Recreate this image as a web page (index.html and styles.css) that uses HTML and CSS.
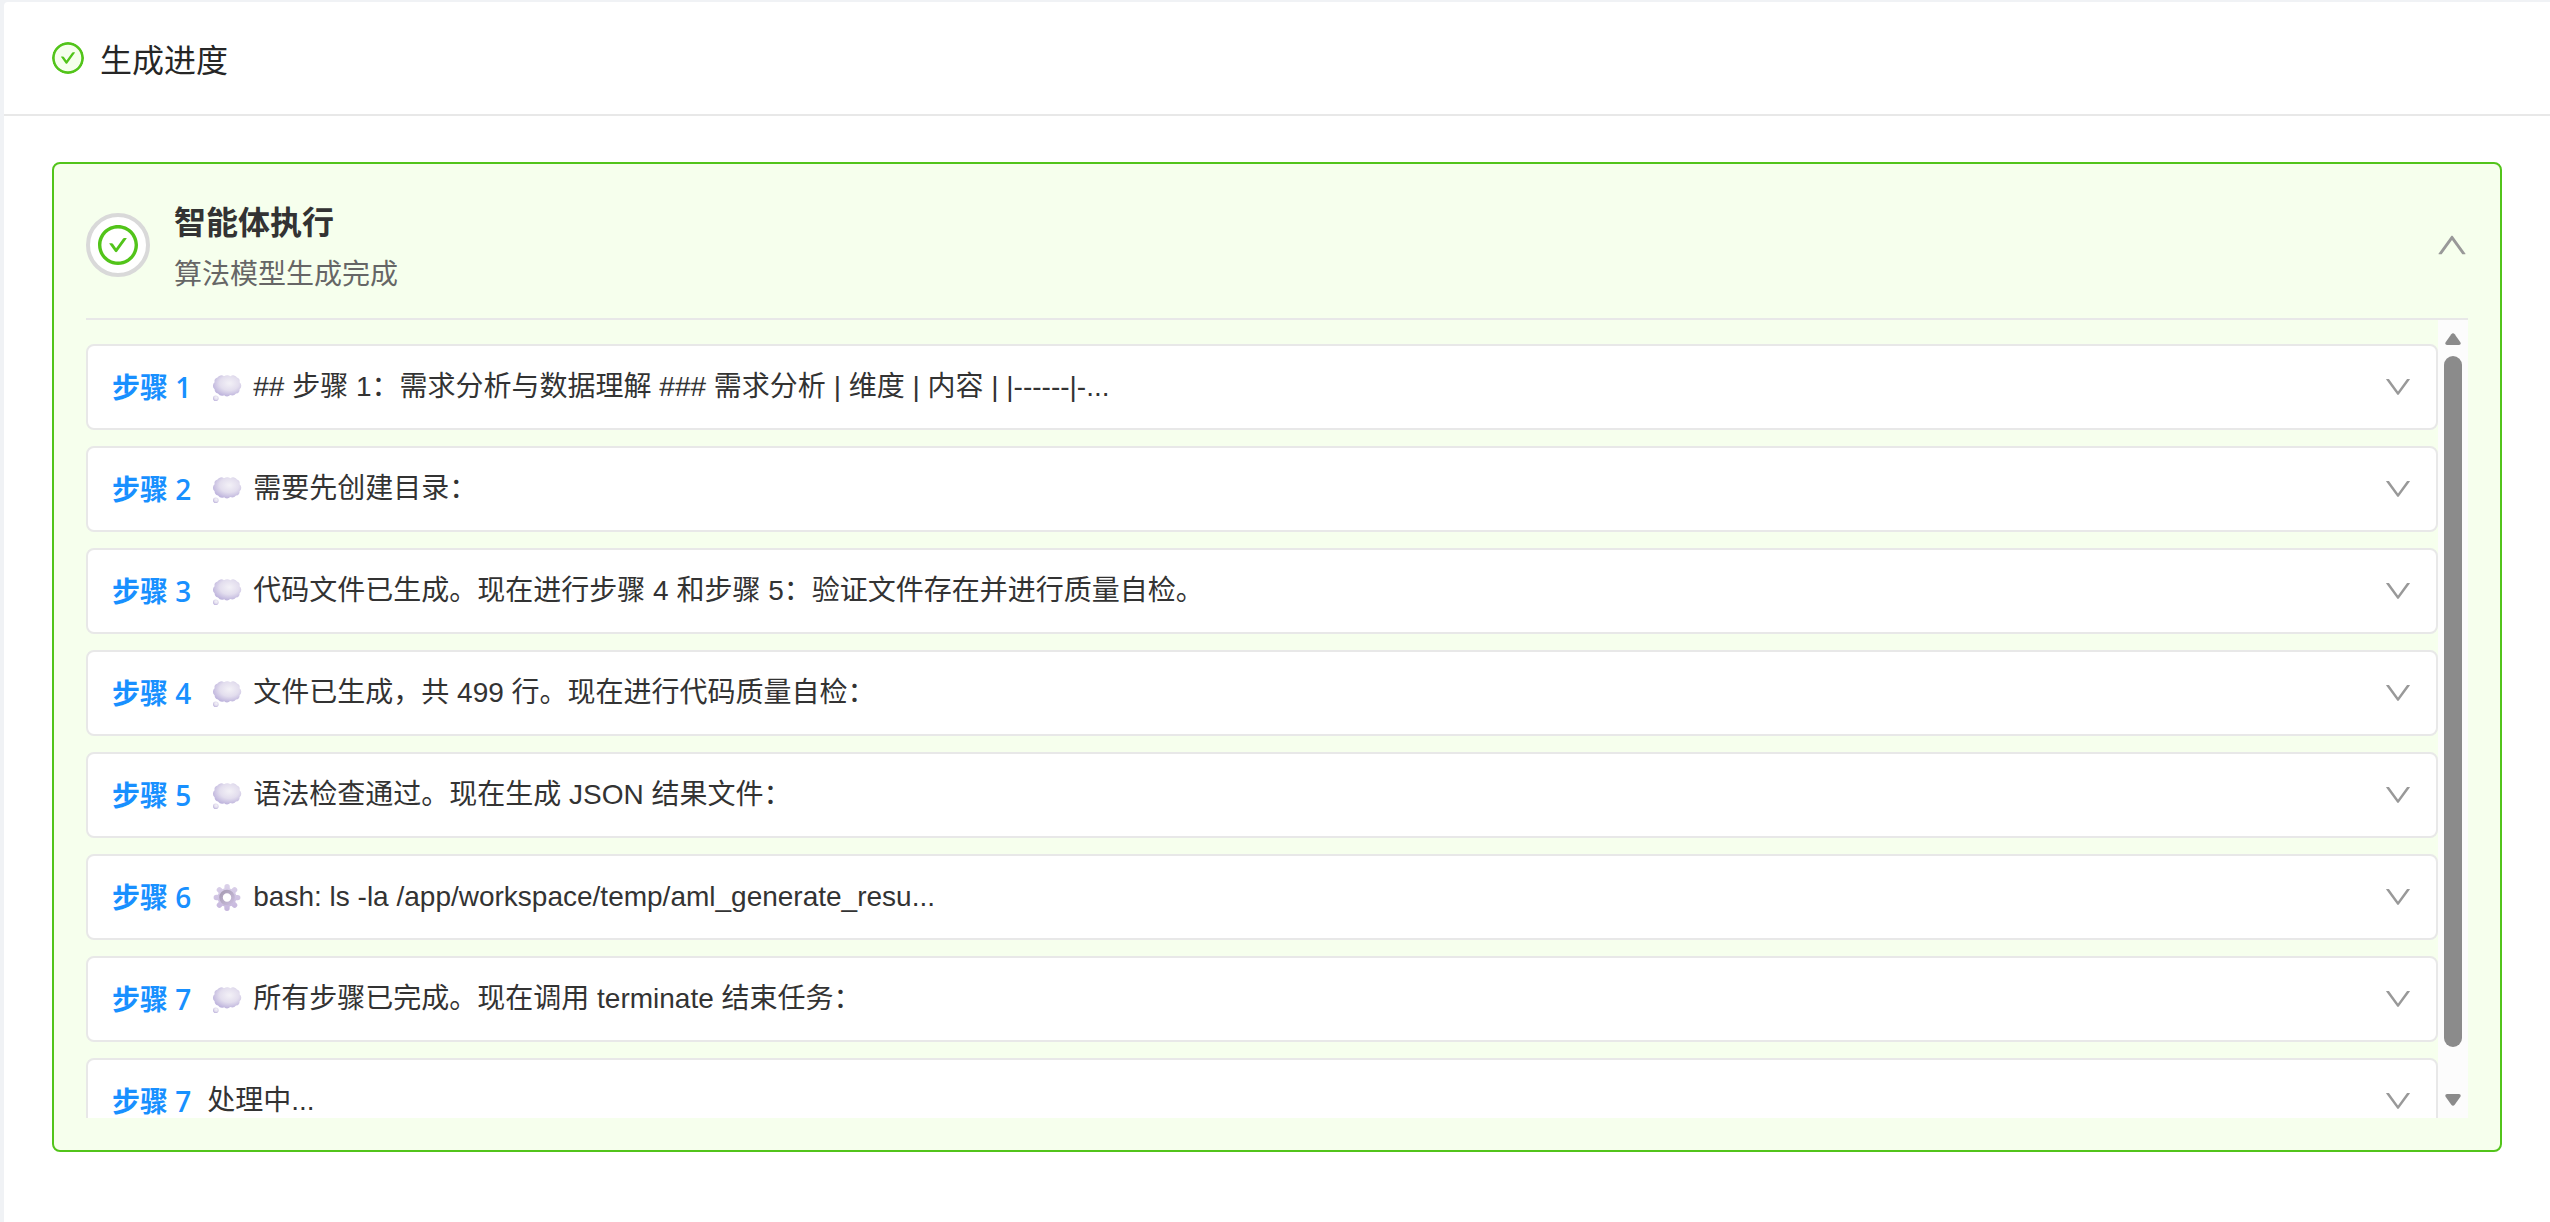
FILE: index.html
```
<!DOCTYPE html>
<html lang="zh-CN">
<head>
    <meta charset="UTF-8">
    <meta name="viewport" content="width=device-width, initial-scale=1.0">
    <title>生成进度</title>
    <link rel="stylesheet" href="styles.css">
</head>
<body>
    <!-- 图标定义 -->
    <svg class="icon-defs" aria-hidden="true">
        <defs>
            <radialGradient id="cloud-fill" cx="58%" cy="38%" r="62%">
                <stop offset="0" stop-color="#f3f1f7"/>
                <stop offset="0.55" stop-color="#e3deee"/>
                <stop offset="1" stop-color="#bfb5dd"/>
            </radialGradient>
            <linearGradient id="gear-fill" gradientUnits="userSpaceOnUse" x1="0" y1="1" x2="0" y2="29">
                <stop offset="0" stop-color="#dcd3ea"/>
                <stop offset="1" stop-color="#c5b5dc"/>
            </linearGradient>
            <linearGradient id="gear-ring" x1="0" y1="0" x2="1" y2="1">
                <stop offset="0" stop-color="#a79cb3"/>
                <stop offset="1" stop-color="#c9bcdc"/>
            </linearGradient>
        </defs>
        <symbol id="icon-check" viewBox="64 64 896 896">
            <path d="M699 353h-46.9c-10.2 0-19.9 4.9-25.9 13.3L469 584.3l-71.2-98.8c-6-8.3-15.6-13.3-25.9-13.3H325c-6.5 0-10.3 7.4-6.5 12.7l124.6 172.8a31.8 31.8 0 0051.7 0l210.6-292c3.9-5.3.1-12.7-6.4-12.7z"/>
            <path d="M512 64C264.6 64 64 264.6 64 512s200.6 448 448 448 448-200.6 448-448S759.4 64 512 64zm0 820c-205.4 0-372-166.6-372-372s166.6-372 372-372 372 166.6 372 372-166.6 372-372 372z"/>
        </symbol>
        <symbol id="icon-down" viewBox="64 64 896 896">
            <path d="M884 256h-75c-5.1 0-9.9 2.5-12.9 6.6L512 654.2 227.9 262.6c-3-4.1-7.8-6.6-12.9-6.6h-75c-6.5 0-10.3 7.4-6.5 12.7l352.6 486.1c12.8 17.6 39 17.6 51.7 0l352.6-486.1c3.9-5.3.1-12.7-6.4-12.7z"/>
        </symbol>
        <symbol id="icon-up" viewBox="64 64 896 896">
            <path d="M890.5 755.3L537.9 269.2c-12.8-17.6-39-17.6-51.7 0L133.5 755.3A8 8 0 00140 768h75c5.1 0 9.9-2.5 12.9-6.6L512 369.8l284.1 391.6c3 4.1 7.8 6.6 12.9 6.6h75c6.5 0 10.3-7.4 6.5-12.7z"/>
        </symbol>
        <symbol id="icon-thought" viewBox="0 0 38 30">
            <path fill="url(#cloud-fill)" d="M10.500 5.500A4.500 4.500 0 0 1 17 4.200A6 6 0 0 1 23.500 4.200A4.500 4.500 0 0 1 30 5.600A4 4 0 0 1 32.600 10.200A4.500 4.500 0 0 1 32.600 17.200A4.200 4.200 0 0 1 29 21.600A5 5 0 0 1 23.200 23A4.500 4.500 0 0 1 17.200 23.200A5 5 0 0 1 11 21.400A4.200 4.200 0 0 1 7.600 17.200A4.500 4.500 0 0 1 7.600 10.200A4 4 0 0 1 10.500 5.500Z"/>
            <circle cx="8.800" cy="26.200" r="2.800" fill="url(#cloud-fill)"/>
        </symbol>
        <symbol id="icon-gear" viewBox="0 0 38 30">
            <g stroke="url(#gear-fill)" stroke-width="5.400" stroke-linecap="round">
                <path d="M20.100 4.800L20 26.200"/>
                <path d="M9.300 15.500L30.700 15.600"/>
                <path d="M12.400 7.900L27.600 23.100"/>
                <path d="M27.600 7.900L12.400 23.100"/>
            </g>
            <circle cx="20" cy="15.500" r="9.400" fill="url(#gear-fill)"/>
            <circle cx="20" cy="15.500" r="6" fill="#fff" stroke="url(#gear-ring)" stroke-width="3.600"/>
        </symbol>
        <symbol id="icon-arrow" viewBox="0 0 16 12">
            <path d="M6.300 1.200Q8 -.8 9.700 1.200L15.400 9.200Q16.400 11.600 14 12H2Q-.4 11.600 .6 9.200Z"/>
        </symbol>
    </svg>

    <main class="panel">
        <header class="panel-header">
            <svg class="panel-icon"><use href="#icon-check"/></svg>
            <h1 class="panel-title">生成进度</h1>
        </header>

        <div class="panel-body">
            <section class="card">
                <button class="card-header" type="button" aria-expanded="true">
                    <span class="status"><svg class="status-icon"><use href="#icon-check"/></svg></span>
                    <span class="card-info">
                        <span class="card-title">智能体执行</span>
                        <span class="card-desc">算法模型生成完成</span>
                    </span>
                    <svg class="card-arrow"><use href="#icon-up"/></svg>
                </button>

                <div class="card-content">
                    <div class="steps">
                        <button class="step" type="button">
                            <span class="step-label">步骤 1</span>
                            <svg class="step-emoji"><use href="#icon-thought"/></svg>
                            <span class="step-text">## 步骤 1：需求分析与数据理解 ### 需求分析 | 维度 | 内容 | |------|-...</span>
                            <svg class="step-arrow"><use href="#icon-down"/></svg>
                        </button>
                        <button class="step" type="button">
                            <span class="step-label">步骤 2</span>
                            <svg class="step-emoji"><use href="#icon-thought"/></svg>
                            <span class="step-text">需要先创建目录：</span>
                            <svg class="step-arrow"><use href="#icon-down"/></svg>
                        </button>
                        <button class="step" type="button">
                            <span class="step-label">步骤 3</span>
                            <svg class="step-emoji"><use href="#icon-thought"/></svg>
                            <span class="step-text">代码文件已生成。现在进行步骤 4 和步骤 5：验证文件存在并进行质量自检。</span>
                            <svg class="step-arrow"><use href="#icon-down"/></svg>
                        </button>
                        <button class="step" type="button">
                            <span class="step-label">步骤 4</span>
                            <svg class="step-emoji"><use href="#icon-thought"/></svg>
                            <span class="step-text">文件已生成，共 499 行。现在进行代码质量自检：</span>
                            <svg class="step-arrow"><use href="#icon-down"/></svg>
                        </button>
                        <button class="step" type="button">
                            <span class="step-label">步骤 5</span>
                            <svg class="step-emoji"><use href="#icon-thought"/></svg>
                            <span class="step-text">语法检查通过。现在生成 JSON 结果文件：</span>
                            <svg class="step-arrow"><use href="#icon-down"/></svg>
                        </button>
                        <button class="step" type="button">
                            <span class="step-label">步骤 6</span>
                            <svg class="step-emoji"><use href="#icon-gear"/></svg>
                            <span class="step-text">bash: ls -la /app/workspace/temp/aml_generate_resu...</span>
                            <svg class="step-arrow"><use href="#icon-down"/></svg>
                        </button>
                        <button class="step" type="button">
                            <span class="step-label">步骤 7</span>
                            <svg class="step-emoji"><use href="#icon-thought"/></svg>
                            <span class="step-text">所有步骤已完成。现在调用 terminate 结束任务：</span>
                            <svg class="step-arrow"><use href="#icon-down"/></svg>
                        </button>
                        <button class="step" type="button">
                            <span class="step-label">步骤 7</span>
                            <span class="step-text">处理中...</span>
                            <svg class="step-arrow"><use href="#icon-down"/></svg>
                        </button>
                    </div>
                    <div class="scrollbar" aria-hidden="true">
                        <svg class="scroll-arrow"><use href="#icon-arrow"/></svg>
                        <div class="scroll-track"><div class="scroll-thumb"></div></div>
                        <svg class="scroll-arrow down"><use href="#icon-arrow"/></svg>
                    </div>
                </div>
            </section>
        </div>
    </main>
</body>
</html>
```
FILE: styles.css
```
* {
    margin: 0;
    padding: 0;
    box-sizing: border-box;
}

body {
    min-height: 100vh;
    padding: 2px 0 0 4px;
    display: flex;
    background-color: #f0f2f5;
    color: #333;
    font-family: 'Noto Sans CJK SC', sans-serif;
    font-size: 28px;
    line-height: 44px;
}

button {
    background: none;
    border: none;
    color: inherit;
    font: inherit;
    text-align: left;
    cursor: pointer;
}

svg {
    display: block;
    flex-shrink: 0;
    fill: currentColor;
}

.icon-defs {
    position: absolute;
    width: 0;
    height: 0;
}

.panel {
    flex: 1;
    min-width: 0;
    background-color: #fff;
    border-top-left-radius: 4px;
}

.panel-header {
    display: flex;
    align-items: center;
    gap: 16px;
    padding: 32px 48px;
    border-bottom: 2px solid #e8e8e8;
}

.panel-icon {
    width: 32px;
    height: 32px;
    color: #52c41a;
    background-color: #f6ffed;
    border-radius: 50%;
}

.panel-title {
    color: #262626;
    font-size: 32px;
    font-weight: 400;
    line-height: 48px;
}

.panel-body {
    padding: 46px 48px;
}

.card {
    padding: 32px;
    background-color: #f6ffed;
    border: 2px solid #52c41a;
    border-radius: 8px;
}

.card-header {
    display: flex;
    align-items: center;
    gap: 24px;
    width: 100%;
    padding-bottom: 24px;
    border-bottom: 2px solid #e8e8e8;
}

.status {
    display: flex;
    align-items: center;
    justify-content: center;
    width: 64px;
    height: 64px;
    background-color: #fff;
    border: 4px solid #d9d9d9;
    border-radius: 50%;
}

.status-icon {
    width: 40px;
    height: 40px;
    color: #52c41a;
}

.card-info {
    display: flex;
    flex: 1;
    flex-direction: column;
    gap: 6px;
}

.card-title {
    font-size: 32px;
    font-weight: 700;
    line-height: 48px;
}

.card-desc {
    color: #666;
}

.card-arrow {
    width: 32px;
    height: 32px;
    color: #999;
}

.card-content {
    display: flex;
    height: 798px;
}

.steps {
    display: flex;
    flex: 1;
    flex-direction: column;
    gap: 16px;
    min-width: 0;
    padding-top: 24px;
    overflow-y: auto;
    scrollbar-width: none;
}

.step {
    display: flex;
    flex-shrink: 0;
    align-items: center;
    height: 86px;
    padding: 0 24px;
    background-color: #fff;
    border: 2px solid #e8e8e8;
    border-radius: 8px;
}

.step-label {
    margin-right: 16px;
    color: #1890ff;
    font-family: 'Open Sans', 'Noto Sans CJK SC', sans-serif;
    font-weight: 600;
}

.step-emoji {
    width: 38px;
    height: 30px;
    margin-right: 8px;
}

.step-text {
    flex: 1;
    overflow: hidden;
    font-family: 'Liberation Sans', 'Noto Sans CJK SC', sans-serif;
    text-overflow: ellipsis;
    white-space: nowrap;
}

.step-arrow {
    width: 28px;
    height: 28px;
    color: #999;
}

.scrollbar {
    display: flex;
    flex-direction: column;
    align-items: center;
    gap: 11px;
    width: 30px;
    padding: 13px 0 12px;
    background-color: #fcfcfc;
}

.scroll-arrow {
    width: 16px;
    height: 12px;
    color: #8b8b8b;
}

.scroll-arrow.down {
    transform: rotate(180deg);
}

.scroll-track {
    flex: 1;
}

.scroll-thumb {
    width: 18px;
    height: 95%;
    background-color: #8b8b8b;
    border-radius: 9px;
}
```
